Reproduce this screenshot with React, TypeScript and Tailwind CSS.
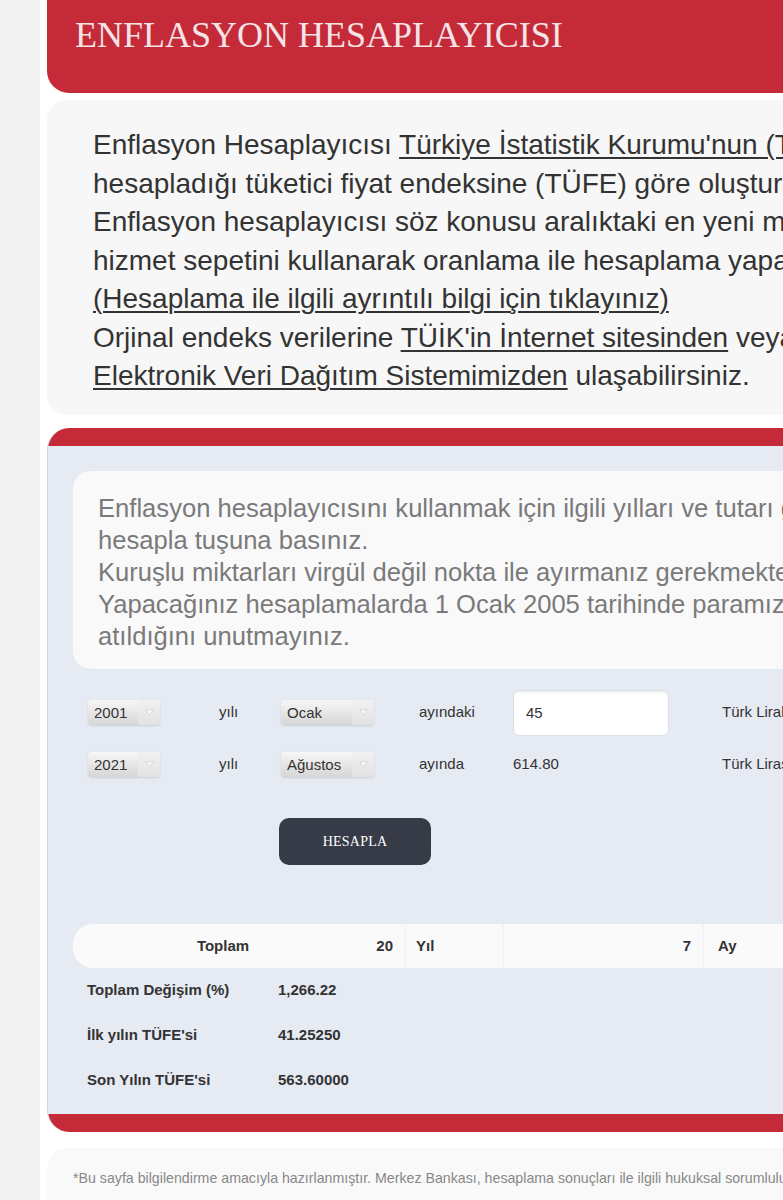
import React from "react";

const sans = { fontFamily: '"Liberation Sans", Arial, Helvetica, sans-serif' };
const serif = { fontFamily: '"Liberation Serif", "Times New Roman", serif' };

function Select({ value, width }: { value: string; width: string }) {
  return (
    <div
      className={`${width} h-[25px] flex rounded-[4px] overflow-hidden shadow-[0_1px_2px_rgba(0,0,0,0.12)] bg-gradient-to-b from-[#f7f7f7] to-[#d6d6d6]`}
    >
      <span className="flex-1 pl-[6px] text-[15px] leading-[25px] text-[#333]">{value}</span>
      <span className="w-[22px] flex items-center justify-center bg-gradient-to-b from-[#f1f1f1] to-[#e2e2e2]">
        <svg width="9" height="7" viewBox="0 0 9 7">
          <path d="M0.8 0.8 L4.5 6 L8.2 0.8 Z" fill="#fafafa" stroke="#cfcfcf" strokeWidth="0.8" />
        </svg>
      </span>
    </div>
  );
}

function Link({ children }: { children: React.ReactNode }) {
  return <span className="underline underline-offset-[3px] decoration-[1.5px]">{children}</span>;
}

export default function App() {
  return (
    <div className="w-[783px] h-[1200px] overflow-hidden bg-white flex" style={sans}>
      <div className="w-[40px] shrink-0 bg-[#f2f2f2]" />
      <div className="pl-[7px] w-[1200px] shrink-0">
        {/* başlık */}
        <div className="h-[93px] bg-[#c42a38] rounded-bl-[22px] pl-[28px] pt-[13px]">
          <h1 className="text-[36px] leading-[44px] text-[#f5e3e6] font-normal" style={serif}>
            ENFLASYON HESAPLAYICISI
          </h1>
        </div>

        {/* açıklama */}
        <div className="mt-[7px] bg-[#f7f7f7] rounded-[20px] pt-[26px] pb-[19px] pl-[46px] text-[28px] leading-[38.5px] text-[#333] whitespace-nowrap">
          <div>
            Enflasyon Hesaplayıcısı <Link>Türkiye İstatistik Kurumu'nun (TÜİK)</Link> tarafından
          </div>
          <div>hesapladığı tüketici fiyat endeksine (TÜFE) göre oluşturulmuştur.</div>
          <div>Enflasyon hesaplayıcısı söz konusu aralıktaki en yeni mal ve</div>
          <div>hizmet sepetini kullanarak oranlama ile hesaplama yapar.</div>
          <div>
            <Link>(Hesaplama ile ilgili ayrıntılı bilgi için tıklayınız)</Link>
          </div>
          <div>
            Orjinal endeks verilerine <Link>TÜİK'in İnternet sitesinden</Link> veya
          </div>
          <div>
            <Link>Elektronik Veri Dağıtım Sistemimizden</Link> ulaşabilirsiniz.
          </div>
        </div>

        {/* hesaplayıcı paneli */}
        <div className="mt-[13px] rounded-tl-[22px] rounded-bl-[22px] overflow-hidden border-l border-[#cfd3da]">
          <div className="h-[18px] bg-[#c42a38]" />
          <div className="bg-[#e6eaf3] pb-[11px]">
            <div className="pt-[25px] pl-[25px]">
              <div className="bg-[#f9f9fa] rounded-[18px] pt-[21px] pb-[17px] pl-[25px] text-[25.6px] leading-[32px] text-[#7a7a7a] whitespace-nowrap">
                <div>Enflasyon hesaplayıcısını kullanmak için ilgili yılları ve tutarı girip</div>
                <div>hesapla tuşuna basınız.</div>
                <div>Kuruşlu miktarları virgül değil nokta ile ayırmanız gerekmektedir.</div>
                <div>Yapacağınız hesaplamalarda 1 Ocak 2005 tarihinde paramızdan 6 sıfır</div>
                <div>atıldığını unutmayınız.</div>
              </div>
            </div>

            {/* form */}
            <div className="mt-[21px] pl-[40px] text-[15px] text-[#333] whitespace-nowrap">
              <div className="h-[46px] flex items-center">
                <div className="w-[131px]">
                  <Select value="2001" width="w-[72px]" />
                </div>
                <div className="w-[62px]">yılı</div>
                <div className="w-[138px]">
                  <Select value="Ocak" width="w-[93px]" />
                </div>
                <div className="w-[94px]">ayındaki</div>
                <div className="w-[209px]">
                  <div className="w-[156px] h-[46px] bg-white rounded-[6px] border border-[#dcdfe4] shadow-[inset_0_2px_2px_rgba(0,0,0,0.05)] pl-[12px] leading-[44px]">
                    45
                  </div>
                </div>
                <div>Türk Liralık</div>
              </div>
              <div className="mt-[6px] h-[46px] flex items-center">
                <div className="w-[131px]">
                  <Select value="2021" width="w-[72px]" />
                </div>
                <div className="w-[62px]">yılı</div>
                <div className="w-[138px]">
                  <Select value="Ağustos" width="w-[93px]" />
                </div>
                <div className="w-[94px]">ayında</div>
                <div className="w-[209px]">614.80</div>
                <div>Türk Lirası</div>
              </div>
            </div>

            <div className="mt-[30px] ml-[231px] w-[152px] h-[47px] rounded-[10px] bg-[#363b47] flex items-center justify-center">
              <span className="text-[14px] text-white tracking-[0.2px]" style={serif}>
                HESAPLA
              </span>
            </div>

            {/* sonuç tablosu */}
            <div className="mt-[59px] ml-[25px] h-[44px] bg-[#fafafa] rounded-l-[20px] flex text-[15px] font-bold text-[#333] leading-[44px]">
              <div className="w-[300px] text-center">Toplam</div>
              <div className="w-[32px] text-right pr-[12px]">20</div>
              <div className="w-[98px] pl-[10px] border-l border-[#f0f1f3]">Yıl</div>
              <div className="w-[200px] text-right pr-[12px] border-l border-[#f0f1f3]">7</div>
              <div className="w-[120px] pl-[14px] border-l border-[#f0f1f3]">Ay</div>
            </div>
            <div className="ml-[39px] text-[15px] font-bold text-[#333]">
              {[
                ["Toplam Değişim (%)", "1,266.22"],
                ["İlk yılın TÜFE'si", "41.25250"],
                ["Son Yılın TÜFE'si", "563.60000"],
              ].map(([label, value]) => (
                <div key={label} className="h-[45px] flex items-center">
                  <div className="w-[191px]">{label}</div>
                  <div>{value}</div>
                </div>
              ))}
            </div>
          </div>
          <div className="h-[18px] bg-[#c42a38]" />
        </div>

        {/* dipnot */}
        <div className="mt-[16px] h-[120px] bg-[#f9f9f9] rounded-[20px] pl-[26px] pt-[20px] text-[14.2px] leading-[20px] text-[#888] whitespace-nowrap">
          *Bu sayfa bilgilendirme amacıyla hazırlanmıştır. Merkez Bankası, hesaplama sonuçları ile ilgili hukuksal sorumluluk kabul etmez.
        </div>
      </div>
    </div>
  );
}
